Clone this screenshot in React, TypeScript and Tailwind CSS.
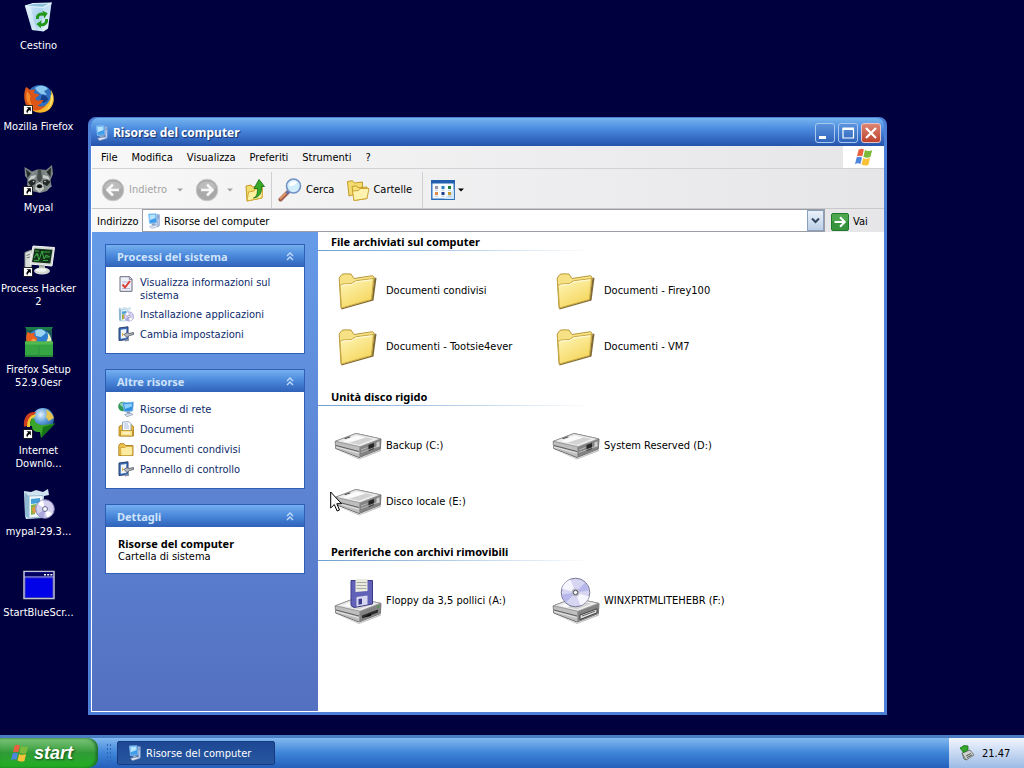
import { useState } from "react";
import type { FC, ReactNode } from "react";

/* ---------- icons ---------- */

const ComputerIcon: FC<{ className?: string }> = ({ className }) => (
  <svg viewBox="0 0 16 16" className={className} aria-hidden="true">
    <path d="M2.500 1 10 .8l.8 9-7.300.700z" fill="#3f9dea" stroke="#8cc8f6" strokeWidth=".8" />
    <path d="M3.300 1.800 9.200 1.600l.4 3.400-6 2.200z" fill="#b5e2ff" />
    <path d="m11 1.200 2.400.6v11l-2.200 1z" fill="#b9cdea" stroke="#6d8bc0" strokeWidth=".6" />
    <path d="M11.700 3.200h1.200M11.700 4.800h1.200" stroke="#4b6fae" strokeWidth=".7" />
    <path d="m5.500 10.600 4-.4.4 2-4 .6z" fill="#8fa3c4" />
    <path d="M3.500 13.400 11 11.900l1.600 1.400-7 2.200z" fill="#e6edf8" stroke="#8b9cba" strokeWidth=".6" />
  </svg>
);

const WindowsFlag: FC<{ className?: string }> = ({ className }) => (
  <svg viewBox="0 0 20 18" className={className} aria-hidden="true">
    <path d="M4.600 1.800C6.400.6 8.100.6 9.900 1.500L8.300 8.300C6.500 7.400 4.700 7.400 2.900 8.500z" fill="#e8603c" />
    <path d="M11 2c2.200 1.100 4.600 1.300 7.200.2L16.400 9c-2.400 1-4.800.8-7-.2z" fill="#7cba3c" />
    <path d="M2.600 9.600c1.800-1 3.600-1.100 5.400-.2L6.400 16c-1.800-.9-3.600-.9-5.400.2z" fill="#4f86dd" />
    <path d="M9.100 9.900c2.200 1.100 4.600 1.200 7 .2L14.400 17c-2.400.9-4.600.6-6.900-.4z" fill="#f8c13a" />
  </svg>
);

const ShortcutArrow = () => (
  <g>
    <path d="M0.500 22.500h9v9h-9z" fill="#fff" stroke="#000" strokeWidth=".8" />
    <path d="M3.500 24.200h4.300v4.300L6.400 27.100 5.200 28.300c-.6.6-.7 1.300-.6 2.200-1.500-1.300-1.500-2.900-.4-4l1-1z" fill="#000" />
  </g>
);

const RecycleBinIcon = () => (
  <svg viewBox="0 0 32 32" className="size-8">
    <defs>
      <linearGradient id="bin" x1="0" y1="0" x2="1" y2="1">
        <stop offset="0" stopColor="#d6effa" />
        <stop offset=".5" stopColor="#a8d0ee" />
        <stop offset="1" stopColor="#ecf8fd" />
      </linearGradient>
    </defs>
    <path d="M2 4 28.500 1 25 26.500 20.500 29.500 9 28z" fill="url(#bin)" />
    <path d="m2 4 8-2.500L28.500 1 20 5.500z" fill="#8fc3dc" stroke="#e2f5ff" strokeWidth="1.200" />
    <path d="m20 5.500-.5 24 5.500-3L28.500 1z" fill="#ffffff" opacity=".3" />
    <path d="M2 4 9 28l4 .6L8 5z" fill="#fff" opacity=".4" />
    <g fill="none" stroke="#23981b" strokeWidth="3">
      <path d="M14.500 17v-2.500c1-2.500 4-3 6.500-2" />
      <path d="M23.500 17v2.500c-.8 2.500-3.500 4-7 3" />
    </g>
    <path d="m19.500 8.800 5.200 2.500-3.500 5.200zM18.500 18.300l-5.200 3.600 4.500 4.300z" fill="#23981b" />
  </svg>
);

const FirefoxBall = () => (
  <g>
    <circle cx="17" cy="15.500" r="13.500" fill="#2e6fc0" />
    <path d="M12 5c4-3 10-3 13 1l-4 2 3 4-6-1-4-3z" fill="#89c7ef" />
    <path d="M19 12c3 0 6 2 6 5l-4 3-4-2z" fill="#163f8c" />
    <path d="M28 7c5 8 3 17-4 21-7 3.500-15 1-18-4 6 4 12 3 16-1 5-4 7-9 6-16z" fill="#f9b62b" />
    <path d="M29.500 11c1.500 8-2 14-7 16.500 4-4 6-9 5-15z" fill="#fbe46c" />
    <path d="M3 4c2 1 3 2 4 3l5-.5-1.500 3.500c2 1 4 .5 6 2l-3.500 2.500c-1 .5-.5 3 2 3 2 .3 3.500-1 5.500 0-2 1-1.500 4-6 4.500 2 2 5 2 8 .5-4 6-14 7-18.500.5C.5 18.500.5 10 3 4z" fill="#dd5618" />
    <path d="M4 8c-1.500 6-.5 11 3 14l4 3c-3-5-5-7-3.500-12z" fill="#f58a2c" />
  </g>
);

const FirefoxIcon = () => (
  <svg viewBox="0 0 32 32" className="size-8">
    <FirefoxBall />
    <ShortcutArrow />
  </svg>
);

const RaccoonIcon = () => (
  <svg viewBox="0 0 32 32" className="size-8">
    <path d="M1.500 3 9 7.500 14 5.500h5l4 .5L29 1l1 9-2.500 6 1 6-4.500 5-7 2-8-2-5-6 .5-6L2 12z" fill="#7c8583" />
    <path d="m3 5.500 5 4L4.500 14zM28 3.500 23.500 8l4 5z" fill="#262d2c" />
    <path d="M15 5.500h3l1 9.500-2.500 4L14 15z" fill="#454c4b" />
    <path d="m8 12 5-1-1 3-7 3zM20 11l5 1 2 4-7-2z" fill="#c6cec9" />
    <path d="m5 18 4-2.500 4 1-1 3.500-4 2.500zM20 16.500l4-1 3.500 2.500-3.500 4-4-2z" fill="#232928" />
    <circle cx="10.500" cy="17.500" r=".8" fill="#d3ddd9" />
    <circle cx="22" cy="17.500" r=".8" fill="#d3ddd9" />
    <path d="m13 20 3.500-2 3.500 2 1 5-4.500 3.500L12 25z" fill="#c3c9c5" />
    <ellipse cx="16.500" cy="22.300" rx="2.700" ry="2" fill="#0b0f10" />
    <path d="M16.500 24v2.500l-2 .8m2-.8 2 .8M5 22l4 1M24 24l5-2M9 10l2-2M22 9l2 1" stroke="#a5ada9" strokeWidth=".7" fill="none" />
    <ShortcutArrow />
  </svg>
);

const ProcessHackerIcon = () => (
  <svg viewBox="0 0 32 32" className="size-8">
    <path d="M2 7.500 8.500 5v17L2 24z" fill="#d9ddda" stroke="#8f9892" />
    <path d="M3.500 10.500 7 9.300M3.500 13 7 12" stroke="#6f7a73" />
    <path d="m10 1 21.500 1.500L29 21 7 19z" fill="#d8dcd8" stroke="#f4f5f3" />
    <path d="m11.500 3.500 18 1.200L27.300 18.500 9 17z" fill="#12321a" />
    <path d="m11 13 3-5 2 7 3-9 2 8 2-4 4 2M12 6h4m3 1h8M11 15.500h5m4 0h5M13 10h3m6 2h4" stroke="#39a541" strokeWidth="1" fill="none" />
    <path d="m16 20 6 .5v4h-6z" fill="#a9b0aa" />
    <ellipse cx="19" cy="26" rx="8" ry="3.500" fill="#d3d8d3" />
    <ellipse cx="18" cy="25" rx="5.500" ry="1.800" fill="#f3f5f2" />
    <ShortcutArrow />
  </svg>
);

const FirefoxSetupIcon = () => (
  <svg viewBox="0 0 32 32" className="size-8">
    <path d="M2 1h28l-2 4H4z" fill="#1c7b46" />
    <path d="M3 4h26v12H3z" fill="#1b5a55" />
    <circle cx="16.500" cy="15" r="12" fill="#2f7fd0" />
    <path d="M12 5c4-3 9-2 11 2l-5 4-5-1z" fill="#9ad6f3" />
    <path d="M24 6c4 4 5 8 4 11h-6c3-3 4-7 2-11z" fill="#f3ecb2" />
    <path d="m4.500 6 3.500 1.500 4-1-1 3 3.500 3-2 4H4c-1.500-3-1-7 .5-10.500z" fill="#e9611f" />
    <path d="M10 12.500 13.500 14l-1 2H7z" fill="#f7a14a" />
    <path d="M2 15.500h28V31H2z" fill="#35a544" />
    <path d="M2 15.500h28v3H2z" fill="#53ba51" />
    <path d="M2 29h28v2H2z" fill="#27853a" />
    <path d="M15.500 20h1v11h-1z" fill="#2a9140" />
  </svg>
);

const DownloadManagerIcon = () => (
  <svg viewBox="0 0 32 32" className="size-8">
    <defs>
      <radialGradient id="globe" cx=".4" cy=".3" r=".8">
        <stop offset="0" stopColor="#e4f2fc" />
        <stop offset=".45" stopColor="#5a9bd9" />
        <stop offset="1" stopColor="#17488f" />
      </radialGradient>
    </defs>
    <circle cx="20" cy="12" r="11" fill="url(#globe)" />
    <path d="M23 2.500c4 1.500 7 5 7.800 8.500l-5 3-3-4 1-3z" fill="#e5c552" />
    <path d="M1 20C0 10 5 4 13 5l-2 3c-4 1-5 5-5 10z" fill="#cf3d1f" />
    <path d="M4 20C4 12 8 7 13 8l-1 2c-4 1-5 4-5 10z" fill="#f0c935" />
    <path d="M7 19c0-5 1-7 4-8 1 5 4 7 9 7l12-1.500L18 31l-1-6c-6 0-8-2-8-6z" fill="#39a52a" />
    <path d="m20 20 12-3.500L18 31z" fill="#157418" />
    <ShortcutArrow />
  </svg>
);

const InstallerIcon: FC<{ className?: string }> = ({ className }) => (
  <svg viewBox="0 0 32 32" className={className} aria-hidden="true">
    <path d="m1 3 7 1 5-2 7 2 5-3 1 6-5 1-1 22-17 1L2 28z" fill="#cfe4ef" />
    <path d="m6 8 14-.5V29L6 30z" fill="#eff8fc" stroke="#9dbad0" />
    <path d="M2 4.500 6 8v22l-4-2z" fill="#8fb8d2" />
    <path d="m8 11 9-1v5l-9 1z" fill="#46a0d8" />
    <path d="m8 17 5-1-1 10-4 1z" fill="#7fb44b" />
    <path d="m9 20 3-2 1 6-3 2z" fill="#e59c3c" />
    <circle cx="22" cy="21" r="9.300" fill="#d4d0ef" stroke="#8280b3" />
    <path d="m22 21-7-5a9 9 0 0 1 5-4zM22 21l7 4.500a9 9 0 0 1-5 4z" fill="#fff" />
    <path d="m22 21-1 9a9 9 0 0 1-6-4z" fill="#a9a8df" />
    <circle cx="22" cy="21" r="2.500" fill="#f6f6ff" stroke="#66678f" />
  </svg>
);

const BlueWindowIcon = () => (
  <svg viewBox="0 0 32 32" className="size-8">
    <path d="M1 2.500h30v27H1z" fill="#0202e8" stroke="#c3c3cb" strokeWidth="1.500" />
    <path d="M2 3.300h28v4.200H2z" fill="#020260" />
    <path d="M1 8h30" stroke="#c3c3cb" />
    <path d="M21 5h2v1.500h-2zM24.200 5h2v1.500h-2zM27.400 5h2v1.500h-2z" fill="#fff" />
    <path d="M2.500 9h27v19.500h-27z" fill="none" stroke="#3b3bb0" strokeWidth=".7" />
  </svg>
);

const NavCircleIcon: FC<{ forward?: boolean }> = ({ forward }) => (
  <svg viewBox="0 0 24 24" className="size-6">
    <circle cx="12" cy="12" r="10.800" fill="#a9a9a9" stroke="#c9c9c9" />
    <path d="M3 10a9.500 9.500 0 0 1 18 0c-5 2.500-13 2.500-18 0z" fill="#bdbdbd" />
    <path
      d={forward ? "M6 12h11M12 6.500 17.500 12 12 17.500" : "M18 12H7M12 6.500 6.500 12l5.500 5.500"}
      fill="none"
      stroke="#f7f7f7"
      strokeWidth="2.600"
    />
  </svg>
);

const UpFolderIcon = () => (
  <svg viewBox="0 0 24 24" className="size-6">
    <path d="m3 8 5-1 1.500 2L19 7.500V20L4 23z" fill="#f2dc6d" stroke="#c59a2a" />
    <path d="m4 23 1.500-9 5.500-1 1.500-2 7-1L19 20z" fill="#fdf0a0" stroke="#d2a732" />
    <path d="M10.500 20c3.500-1.500 4-4.500 4-9.500h-3.500L16 1.500 21.500 8.500H18.500c.4 6-2 11-8 11.500z" fill="#38a927" stroke="#1b7417" strokeWidth=".9" />
  </svg>
);

const SearchIcon = () => (
  <svg viewBox="0 0 24 24" className="size-6">
    <path d="m10.500 13.500-8 8" stroke="#9c5c4b" strokeWidth="4" strokeLinecap="round" />
    <path d="m10 13-7.500 7.500" stroke="#e29666" strokeWidth="1.800" strokeLinecap="round" />
    <path d="m11.500 12.500-3 3" stroke="#5c6fae" strokeWidth="3" />
    <circle cx="15.500" cy="8" r="7" fill="#d2eefd" stroke="#7391c3" strokeWidth="1.600" />
    <path d="M11 8a5 5 0 0 1 8-4c-1 3-4 4.500-8 4z" fill="#fff" />
  </svg>
);

const FoldersIcon = () => (
  <svg viewBox="0 0 24 24" className="size-6">
    <path d="m1.500 3.500 5-.8 2 2.300 8-1v10L3 18z" fill="#f4dd70" stroke="#c59a2a" />
    <path d="m6 8.500 4.500-.7 1.500 2 9-.8v11.500L8 22.500z" fill="#f7e27b" stroke="#c59a2a" />
    <path d="M8 22.500 6.500 13l6-.5 1.500-2h9L21 20.500z" fill="#fdf3ae" stroke="#cda434" />
  </svg>
);

const ViewsIcon = () => (
  <svg viewBox="0 0 24 20" className="h-5 w-6">
    <path d="M.8.800h22.400v18.400H.8z" fill="#f5faff" stroke="#2a6cb8" strokeWidth="1.400" />
    <path d="M13 19 23 9v10z" fill="#cfe5fb" />
    <path d="M0 0h24v3.500H0z" fill="#1f5fae" />
    <path d="M4 6h3v3H4z" fill="#9a8fa6" /><path d="M10.500 6h3v3h-3z" fill="#2a7fc3" /><path d="M17 6h3v3h-3z" fill="#21803b" />
    <path d="M4 12h3v3H4z" fill="#e08a4a" /><path d="M10.500 12h3v3h-3z" fill="#1e3f8a" /><path d="M17 12h3v3h-3z" fill="#c59a2c" />
    <path d="M4 10.300h3M10.500 10.300h3M17 10.300h3M4 16.300h3M10.500 16.300h3M17 16.300h3" stroke="#b6c3d2" strokeWidth=".8" />
  </svg>
);

const Caret: FC<{ className?: string }> = ({ className }) => (
  <svg viewBox="0 0 6 4" className={`h-1 w-1.5 ${className ?? ""}`}>
    <path d="M0 .5h6L3 3.500z" fill="currentColor" />
  </svg>
);

const GoIcon = () => (
  <svg viewBox="0 0 18 18" className="size-[18px]">
    <rect x=".5" y=".5" width="17" height="17" rx="1.500" fill="#36943c" stroke="#1f7a2c" />
    <path d="M1 1h16v7H1z" fill="#5db45c" opacity=".6" />
    <path d="M3.500 9h10M9 4.200 13.800 9 9 13.800" stroke="#fff" strokeWidth="2" fill="none" />
  </svg>
);

const CheckDocIcon = () => (
  <svg viewBox="0 0 16 16" className="size-4">
    <path d="M2 .7h9.500L14 3v12.300H2z" fill="#eef0f8" stroke="#6b6b80" />
    <path d="M11.300.7V3.500H14" fill="#cfd3e4" stroke="#6b6b80" strokeWidth=".7" />
    <path d="M4 6h7M4 12.500h8" stroke="#b3badb" />
    <path d="m4.500 8.500 2.500 3L12 5" fill="none" stroke="#dc4034" strokeWidth="2" />
  </svg>
);

const SettingsIcon = () => (
  <svg viewBox="0 0 16 16" className="size-4">
    <path d="M1 2 10 .8v12.700L1 14.500z" fill="#3c6fb8" stroke="#27406f" />
    <path d="m2.800 3.800 5.500-.8v8.700l-5.500 1z" fill="#f1f6fb" />
    <path d="m4 6.500 2 2-2 2z" fill="#e2b338" />
    <path d="m6 8.500 3-2 2 1 4.500-1v2L11.500 9.500 9 11.500z" fill="#b4bac4" stroke="#4c5261" strokeWidth=".8" />
    <path d="m7 13.500 4-1v2.200l-4 .8z" fill="#8291ad" />
  </svg>
);

const NetworkIcon = () => (
  <svg viewBox="0 0 16 16" className="size-4">
    <circle cx="5" cy="5.500" r="4.800" fill="#2f9a56" />
    <path d="M1.500 3.500c2-2.500 5.500-2.500 6.500-.5L4.500 6z" fill="#8fd4b0" />
    <path d="m4.500 2 11-1-.8 9-8.200.8z" fill="#2f8fe0" stroke="#8fbde8" strokeWidth=".8" />
    <path d="m6 3.200 8-.7-.2 3-6.800 2.500z" fill="#8bd0fa" />
    <path d="m8.500 10.800 3.500-.3.500 2H9z" fill="#8796ae" />
    <path d="m6.500 13.500 6.500-1.300 2 1.300-6 2.200z" fill="#dbe2ec" stroke="#7b89a3" strokeWidth=".6" />
  </svg>
);

const DocumentsIcon = () => (
  <svg viewBox="0 0 16 16" className="size-4">
    <path d="M1 5.500 4 4l9-.5 2.500 2V15H1z" fill="#e9b93f" stroke="#a67b1a" strokeWidth=".8" />
    <path d="m4.500 1 6.500-.3 2 2V11H4.500z" fill="#fbfcff" stroke="#8293b5" strokeWidth=".8" />
    <path d="M6 3h4M6 5h5M6 7h5" stroke="#93abd4" strokeWidth=".8" />
    <path d="M2.500 9.500h12V15h-12z" fill="#fbe38a" stroke="#b28722" strokeWidth=".8" />
    <path d="M5 12h7" stroke="#fff" />
  </svg>
);

const SmallFolderIcon = () => (
  <svg viewBox="0 0 16 16" className="size-4">
    <path d="M.8 4.500 2 2.700h4L7.500 4.500H15V14.500H.8z" fill="#eec04c" stroke="#aa801f" strokeWidth=".9" />
    <path d="M2.500 6.500H7L8 5.500h6.500V13l-1 1.500H3z" fill="#fdec9f" stroke="#c59a2c" strokeWidth=".7" />
  </svg>
);

const FolderIcon = () => (
  <svg viewBox="0 0 48 48" className="size-12">
    <defs>
      <linearGradient id="folder" x1="0" y1="0" x2=".6" y2="1">
        <stop offset="0" stopColor="#fff7bd" />
        <stop offset="1" stopColor="#f5d65c" />
      </linearGradient>
    </defs>
    <path d="m7.500 43.500 32-9 3-22.500-2-.5-3 20L7 40.500z" fill="#7d6a35" />
    <path d="M5.200 12 8 8.300 11 7.800l6 .2 3 4.500 18.500-2.800 1.500 1.300-2.500 22L7 42z" fill="#f6e284" stroke="#b99a3c" />
    <path d="M6 19.500 9 18l8.500-.5 4-2.700 18-2.300L37.500 33.500 7.500 42z" fill="url(#folder)" stroke="#c9a845" />
    <path d="m7.200 20.300 2-1.200 8.700-.5 4-2.700 16-2" fill="none" stroke="#fffbe0" />
  </svg>
);

const DriveBody: FC<{ children?: ReactNode }> = ({ children }) => (
  <g>
    <path d="m3 34 22 8.500 22-9v1.500L25 43.500z" fill="#000" opacity=".25" />
    <path d="M1.200 25.500 22 17.500l25 5.500-.7 10L25 41.500 1.700 32.500z" fill="#a8a8a8" stroke="#5d5d5d" strokeWidth=".9" />
    <path d="M1.500 25.200 22 17.500l24.500 5.300L26 30.700z" fill="#ececec" stroke="#8a8a8a" strokeWidth=".7" />
    <path d="m8 25.200 14.500-5.700 17 3.600-14.500 5.700z" fill="#d2d2d2" />
    <path d="m22.500 19.500 9 2-16.500 5.300-7-1.600z" fill="#fbfbfb" />
    <path d="m1.500 26 24 5.300V41L1.700 32z" fill="#bebebe" />
    <path d="m2 29.500 23 6" stroke="#5d5d5d" />
    <path d="m2 31 23 6.200" stroke="#f5f5f5" strokeWidth=".7" />
    <path d="m25.500 31.300 21-8V33l-21 8z" fill="#828282" />
    {children}
  </g>
);

const HardDiskIcon = () => (
  <svg viewBox="0 0 48 48" className="size-12">
    <g transform="translate(0 -5)">
      <DriveBody>
        <path d="m10 22.500 5.500-2 1.500.4-5.500 2.100z" fill="#3f3f3f" />
        <path d="m34.500 29 5.500-2v6l-5.500 2z" fill="#262626" />
        <path d="m42.500 26.500 3-1.200v5l-3 1.200z" fill="#cfcfcf" />
        <path d="m27 34 6.500-2.500M27 36.500l19-7" stroke="#cfcfcf" strokeWidth=".7" />
      </DriveBody>
    </g>
  </svg>
);

const FloppyDriveIcon = () => (
  <svg viewBox="0 0 48 48" className="size-12">
    <g transform="translate(0 4.500)">
      <DriveBody>
        <path d="m28 35 16-6v3L28 38z" fill="#2b2b2b" />
        <path d="m30 37 7-4.500v3z" fill="#101010" />
        <path d="M43 25.500h2V27h-2z" fill="#3aa13a" />
      </DriveBody>
    </g>
    <path d="M17 4.500h21.500V28L20 31.500l-3-2z" fill="#6261b8" stroke="#3b3a86" />
    <path d="M21.500 3h12v12l-12 1z" fill="#e9ebdf" />
    <path d="M22.500 6.500h10M22.500 9.500h10M22.500 12.500h10" stroke="#a9aca3" />
    <path d="m22.500 21 11-1.500v9l-11 2z" fill="#d7d8ef" />
    <path d="m24.500 23 3.500-.5v5.500l-3.500.7z" fill="#3c3b92" />
  </svg>
);

const CdDriveIcon = () => (
  <svg viewBox="0 0 48 48" className="size-12">
    <g transform="translate(0 4.500)">
      <DriveBody>
        <path d="m28 34.500 17-6.200v4L28 39z" fill="#dedede" stroke="#3f3f3f" />
        <path d="m30 35.500 13-4.800" stroke="#5e5e5e" />
      </DriveBody>
    </g>
    <circle cx="23.500" cy="16.500" r="14.300" fill="#d6d6f3" stroke="#767694" />
    <path d="M23.500 16.500 9.900 12.500a14 14 0 0 1 8.500-9zM23.500 16.500l13.500 4a14 14 0 0 1-8.500 9z" fill="#f6f6ff" />
    <path d="M23.500 16.500 33 6.500a14 14 0 0 1 4 8zM23.500 16.500 14 26.500a14 14 0 0 1-4-8z" fill="#b7b7ec" />
    <circle cx="23.500" cy="16.500" r="4" fill="#b9b9c9" />
    <circle cx="23.500" cy="16.500" r="2.200" fill="#f4f4f4" stroke="#51515f" />
  </svg>
);

const DoubleChevron = () => (
  <svg viewBox="0 0 8 9" className="h-[9px] w-2">
    <path d="m1 4 3-3 3 3M1 8l3-3 3 3" fill="none" stroke="#c3dcfb" strokeWidth="1.300" />
  </svg>
);

const TrayIcon = () => (
  <svg viewBox="0 0 16 16" className="size-4">
    <path d="m3 8 8-3 4 5-8 5z" fill="#cdd0cd" stroke="#5f6762" strokeWidth=".8" />
    <path d="m7 11 5-2.500M8 12.500l5-2.500" stroke="#4f5652" />
    <path d="m1 3 4-2.500L9 1v4L4.500 7.500z" fill="#35a52c" stroke="#17751a" strokeWidth=".8" />
    <path d="m3 8 2 6 3 1" fill="none" stroke="#6c7570" />
  </svg>
);

/* ---------- data ---------- */

const DESKTOP_ICONS: { label: string; icon: ReactNode }[] = [
  { label: "Cestino", icon: <RecycleBinIcon /> },
  { label: "Mozilla Firefox", icon: <FirefoxIcon /> },
  { label: "Mypal", icon: <RaccoonIcon /> },
  { label: "Process Hacker 2", icon: <ProcessHackerIcon /> },
  { label: "Firefox Setup 52.9.0esr", icon: <FirefoxSetupIcon /> },
  { label: "Internet Downlo...", icon: <DownloadManagerIcon /> },
  { label: "mypal-29.3...", icon: <InstallerIcon className="size-8" /> },
  { label: "StartBlueScr...", icon: <BlueWindowIcon /> },
];

const MENU = ["File", "Modifica", "Visualizza", "Preferiti", "Strumenti", "?"];

const SYSTEM_TASKS = [
  { label: "Visualizza informazioni sul sistema", icon: <CheckDocIcon /> },
  { label: "Installazione applicazioni", icon: <InstallerIcon className="size-4" /> },
  { label: "Cambia impostazioni", icon: <SettingsIcon /> },
];

const OTHER_PLACES = [
  { label: "Risorse di rete", icon: <NetworkIcon /> },
  { label: "Documenti", icon: <DocumentsIcon /> },
  { label: "Documenti condivisi", icon: <SmallFolderIcon /> },
  { label: "Pannello di controllo", icon: <SettingsIcon /> },
];

const GROUPS = [
  {
    title: "File archiviati sul computer",
    items: [
      { label: "Documenti condivisi", icon: <FolderIcon /> },
      { label: "Documenti - Firey100", icon: <FolderIcon /> },
      { label: "Documenti - Tootsie4ever", icon: <FolderIcon /> },
      { label: "Documenti - VM7", icon: <FolderIcon /> },
    ],
  },
  {
    title: "Unità disco rigido",
    items: [
      { label: "Backup (C:)", icon: <HardDiskIcon /> },
      { label: "System Reserved (D:)", icon: <HardDiskIcon /> },
      { label: "Disco locale (E:)", icon: <HardDiskIcon /> },
    ],
  },
  {
    title: "Periferiche con archivi rimovibili",
    items: [
      { label: "Floppy da 3,5 pollici (A:)", icon: <FloppyDriveIcon /> },
      { label: "WINXPRTMLITEHEBR (F:)", icon: <CdDriveIcon /> },
    ],
  },
];

/* ---------- window parts ---------- */

const TitleBar = () => (
  <header className="flex h-7 shrink-0 items-center gap-[3px] rounded-t-[7px] bg-linear-to-b from-[#74b4ee] via-[#4a8ae0] via-40% to-[#2753ab] pt-0.5 pr-[3px] pl-[3px]">
    <ComputerIcon className="size-4" />
    <h1 className="flex-1 font-['Noto_Sans',sans-serif] text-[12px] leading-4 font-bold text-white [text-shadow:1px_1px_1px_#12306e]">
      Risorse del computer
    </h1>
    <button type="button" aria-label="Riduci a icona" className="size-5 rounded-[3px] border border-[#a9c8f0] bg-linear-to-b from-[#5c93dc] to-[#2f65bd]">
      <svg viewBox="0 0 18 18"><path d="M3 12h7v3H3z" fill="#fff" /></svg>
    </button>
    <button type="button" aria-label="Ingrandisci" className="size-5 rounded-[3px] border border-[#a9c8f0] bg-linear-to-b from-[#5c93dc] to-[#2f65bd]">
      <svg viewBox="0 0 18 18"><path d="M4 5h10.500v9H4z" fill="none" stroke="#fff" strokeWidth="1.200" /><path d="M3.500 3.500H15V6H3.500z" fill="#fff" /></svg>
    </button>
    <button type="button" aria-label="Chiudi" className="size-5 rounded-[3px] border border-[#e8c3c4] bg-linear-to-b from-[#dd8573] to-[#bd3f2c]">
      <svg viewBox="0 0 18 18"><path d="m4 4 10 10M14 4 4 14" stroke="#fff" strokeWidth="2.200" /></svg>
    </button>
  </header>
);

const MenuBar = () => (
  <nav className="flex h-[23px] shrink-0 border-b border-[#d2d2d4]">
    <div className="flex flex-1 items-center gap-3.5 pl-[9px]">
      {MENU.map((m) => (
        <button key={m} type="button">{m}</button>
      ))}
    </div>
    <div className="flex w-[41px] items-center justify-center bg-white">
      <WindowsFlag className="h-[18px] w-5" />
    </div>
  </nav>
);

const Toolbar = () => (
  <div className="flex h-10 shrink-0 items-center border-b border-[#c9c9cb] pt-0.5 pl-[9px]">
    <button type="button" disabled className="flex items-center gap-1 text-[#a3a3a3]">
      <NavCircleIcon />
      Indietro
      <Caret className="ml-1.5" />
    </button>
    <button type="button" disabled aria-label="Avanti" className="ml-3 flex items-center gap-2 text-[#a3a3a3]">
      <NavCircleIcon forward />
      <Caret />
    </button>
    <button type="button" aria-label="Cartella superiore" className="ml-2.5">
      <UpFolderIcon />
    </button>
    <span className="mr-1.5 ml-1 h-9 w-px bg-[#d0d0d2]" />
    <button type="button" className="flex items-center gap-1">
      <SearchIcon />
      Cerca
    </button>
    <button type="button" className="ml-3 flex items-center gap-[3px]">
      <FoldersIcon />
      Cartelle
    </button>
    <span className="mr-2 ml-2.5 h-9 w-px bg-[#d0d0d2]" />
    <button type="button" aria-label="Visualizza" className="flex items-center gap-[3px]">
      <ViewsIcon />
      <Caret />
    </button>
  </div>
);

const AddressBar = () => {
  const [address, setAddress] = useState("Risorse del computer");

  return (
    <form onSubmit={(e) => e.preventDefault()} className="flex h-[23px] shrink-0 items-stretch">
      <label htmlFor="address" className="flex w-[50px] items-center pt-0.5 pl-[5px]">Indirizzo</label>
      <div className="flex flex-1 items-center gap-0.5 border border-[#9a9da3] bg-white pl-[3px]">
        <ComputerIcon className="size-4" />
        <input
          id="address"
          value={address}
          onChange={(e) => setAddress(e.target.value)}
          className="h-full min-w-0 flex-1 pt-0.5 focus:outline-none"
        />
        <button type="button" aria-label="Elenco indirizzi" className="flex h-full w-[17px] items-center justify-center border border-[#8aa0bd] bg-linear-to-b from-[#eaf1fa] to-[#bccfe6]">
          <svg viewBox="0 0 9 7" className="h-[7px] w-[9px]"><path d="m1 1.500 3.500 3.500L8 1.500" fill="none" stroke="#33475f" strokeWidth="2" /></svg>
        </button>
      </div>
      <button type="submit" className="flex w-[59px] items-center gap-1 pt-0.5 pl-1.5">
        <GoIcon />
        Vai
      </button>
    </form>
  );
};

const SidePanel: FC<{ title: string; children: ReactNode }> = ({ title, children }) => {
  const [open, setOpen] = useState(true);

  return (
    <section className="border border-[#2f5fb4] bg-white">
      <button
        type="button"
        onClick={() => setOpen(!open)}
        className="flex h-[22px] w-full items-center justify-between bg-linear-to-b from-[#74b0f0] via-[#4a87da] via-50% to-[#2f62b8] pr-2.5 pl-[11px] font-['Noto_Sans',sans-serif] font-bold text-[#cfe4fb]"
      >
        {title}
        <DoubleChevron />
      </button>
      {open && children}
    </section>
  );
};

const LinkList: FC<{ links: { label: string; icon: ReactNode }[] }> = ({ links }) => (
  <ul className="flex flex-col gap-1 pt-[9px] pr-6 pb-[11px] pl-3">
    {links.map((l) => (
      <li key={l.label}>
        <a href="#" className="flex min-h-4 items-center gap-1.5 text-[#0c2a6b] hover:underline">
          <span className="shrink-0 self-start">{l.icon}</span>
          {l.label}
        </a>
      </li>
    ))}
  </ul>
);

const ExplorerWindow = () => (
  <main className="absolute top-[117px] right-[137px] bottom-5 left-[88px] flex flex-col rounded-t-lg border-x-[3px] border-t border-b-[3px] border-[#4d7fd6] bg-[#3f73cc]">
    <TitleBar />
    <div className="flex min-h-0 flex-1 flex-col border-b border-l border-white bg-linear-to-r from-[#f8f8f8] to-[#e6e5e8]">
      <MenuBar />
      <Toolbar />
      <AddressBar />
      <div className="flex min-h-0 flex-1">
        <aside className="flex w-[226px] shrink-0 flex-col gap-[15px] bg-linear-to-b from-[#659be8] to-[#5470c0] px-[13px] pt-3">
          <SidePanel title="Processi del sistema">
            <LinkList links={SYSTEM_TASKS} />
          </SidePanel>
          <SidePanel title="Altre risorse">
            <LinkList links={OTHER_PLACES} />
          </SidePanel>
          <SidePanel title="Dettagli">
            <div className="px-3 pt-2.5 pb-2.5">
              <p className="font-['Noto_Sans',sans-serif] font-bold">Risorse del computer</p>
              <p>Cartella di sistema</p>
            </div>
          </SidePanel>
        </aside>
        <div className="flex min-w-0 flex-1 flex-col gap-[13px] overflow-hidden bg-white">
          {GROUPS.map((g) => (
            <section key={g.title}>
              <h2 className="pt-[3px] pb-0.5 pl-[13px] font-['Noto_Sans',sans-serif] font-bold">{g.title}</h2>
              <div className="h-px w-[274px] bg-linear-to-r from-[#6f9fd0] to-white" />
              <div className="mt-[11px] grid min-h-14 grid-cols-[218px_218px] pl-4">
                {g.items.map((item) => (
                  <button key={item.label} type="button" className="flex h-14 items-center gap-1 text-left">
                    {item.icon}
                    {item.label}
                  </button>
                ))}
              </div>
            </section>
          ))}
        </div>
      </div>
    </div>
  </main>
);

const Taskbar = () => (
  <footer className="flex h-[33px] shrink-0 items-stretch border-t-[3px] border-[#4a7cc4] bg-linear-to-b from-[#82b8ee] via-[#3d84d8] via-50% to-[#2460bc]">
    <button
      type="button"
      className="flex w-[98px] items-center gap-1 rounded-r-[10px] bg-linear-to-b from-[#7cc67a] via-[#2f9a35] via-50% to-[#1fb11f] pl-2.5 shadow-[inset_-2px_0_3px_#1d6b2a]"
    >
      <WindowsFlag className="h-[18px] w-5" />
      <span className="font-['Liberation_Sans',sans-serif] text-[18px] leading-5 font-bold text-white italic [text-shadow:1px_1px_2px_#14501a]">start</span>
    </button>
    <div className="flex flex-1 items-center pl-2">
      <span className="mr-[5px] h-5 w-1.5 bg-[radial-gradient(#2d62b4_1px,transparent_1px)] bg-size-[3px_4px]" />
      <button type="button" className="flex h-6 w-[158px] items-center gap-[3px] rounded-xs border border-[#153a80] bg-linear-to-b from-[#1d4794] to-[#27579f] pl-[9px] text-white">
        <ComputerIcon className="size-4" />
        Risorse del computer
      </button>
    </div>
    <div className="flex w-[75px] items-center gap-[7px] bg-linear-to-b from-[#f2f6fd] to-[#9dbbe6] pl-2.5">
      <TrayIcon />
      <time>21.47</time>
    </div>
  </footer>
);

const App = () => (
  <div className="flex h-screen flex-col bg-[#00003f] font-['DejaVu_Sans_Condensed','Noto_Sans',sans-serif] text-[11px] leading-[13px] text-black">
    <div className="relative min-h-0 flex-1">
      <ul className="w-[77px]">
        {DESKTOP_ICONS.map((d) => (
          <li key={d.label} className="h-[81px] pt-0.5">
            <button type="button" className="flex w-full flex-col items-center gap-[5px] text-center text-white">
              {d.icon}
              {d.label}
            </button>
          </li>
        ))}
      </ul>
      <ExplorerWindow />
      <svg viewBox="0 0 12 21" className="absolute top-[491px] left-[330px] h-[21px] w-3">
        <path d="M.7 1v16l3.600-3.500 2.800 6.500 2.400-1-2.700-6.300h4.700z" fill="#fff" stroke="#000" />
      </svg>
    </div>
    <Taskbar />
  </div>
);

export default App;
